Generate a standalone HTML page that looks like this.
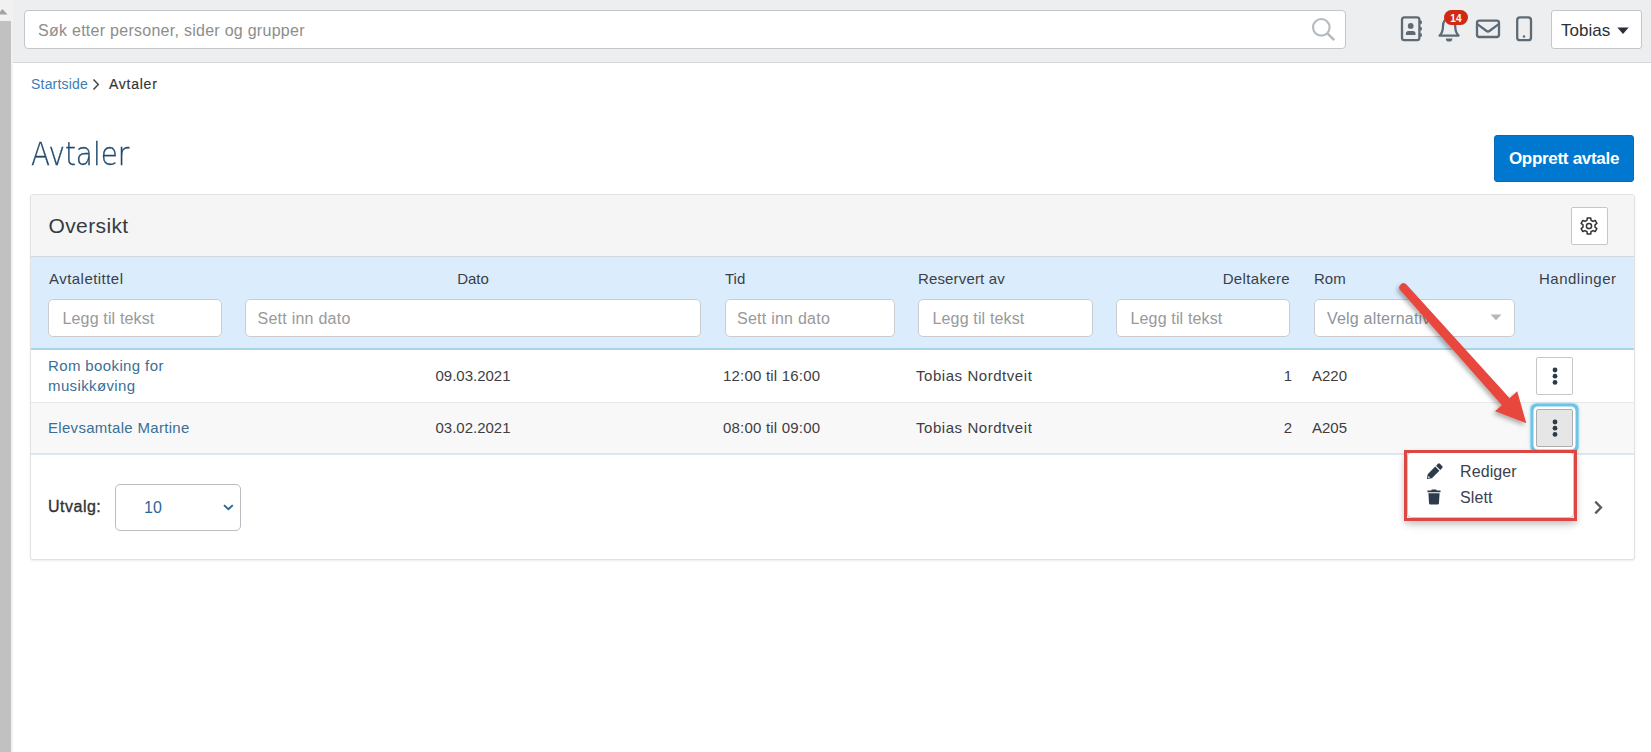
<!DOCTYPE html>
<html lang="nb">
<head>
<meta charset="utf-8">
<title>Avtaler</title>
<style>
*{box-sizing:border-box;margin:0;padding:0}
html,body{width:1651px;height:752px;overflow:hidden;background:#fff}
body{position:relative;font-family:"Liberation Sans",sans-serif;font-size:15px;color:#333;line-height:20px}
a{text-decoration:none;color:inherit}
.abs{position:absolute;white-space:nowrap}

/* left (clipped) browser scrollbar */
.scroll{position:absolute;left:0;top:0;width:13px;height:752px;background:#f1f1f1;z-index:20}
.scroll .thumb{position:absolute;left:0;top:21px;width:11px;height:731px;background:#c1c1c1}
.scroll svg{position:absolute;left:0;top:9px}

/* top bar */
.top{position:absolute;left:0;top:0;width:1651px;height:63px;background:#edeef0;border-bottom:1px solid #d4d6d9}
.search{position:absolute;left:24px;top:10px;width:1322px;height:39px;background:#fff;border:1px solid #c3c7ca;border-radius:4px}
.search .ph{position:absolute;left:13px;top:10px;font-size:16px;line-height:20px;color:#8d8d8d;letter-spacing:.27px;white-space:nowrap}
.search svg{position:absolute;left:1284.500px;top:5px}
.ico{position:absolute;top:0;left:0}
.badge{position:absolute;left:1444px;top:10px;width:24px;height:15px;border-radius:8px;background:#d12a14;color:#fff;font-size:10px;font-weight:700;line-height:18px;text-align:center;letter-spacing:.3px}
.user{position:absolute;left:1551px;top:10px;width:91px;height:39px;background:#fff;border:1px solid #c3c7ca;border-radius:3px}
.user span{position:absolute;left:9px;top:10px;font-size:17px;line-height:20px;color:#2b2f38;white-space:nowrap}
.user svg{position:absolute;left:65px;top:16px}

/* breadcrumb + title */
.crumbs{position:absolute;left:31px;top:74px;height:20px;font-size:14px;line-height:20px;white-space:nowrap}
.crumbs a{color:#3c7db4;letter-spacing:.2px}
.crumbs b{font-weight:400;-webkit-text-stroke:.15px #333;color:#333;letter-spacing:.75px;position:absolute;left:78px;top:0}
.crumbs svg{position:absolute;left:60px;top:4px}
h1{position:absolute;left:31px;top:132px;font-family:"DejaVu Sans Light","DejaVu Sans","Liberation Sans",sans-serif;font-size:31.500px;line-height:44px;font-weight:200;color:#1f4a6e;-webkit-text-stroke:.3px #1f4a6e;white-space:nowrap;transform:scaleX(.885);transform-origin:0 0}
.primary{position:absolute;left:1494px;top:135px;width:140px;height:47px;background:#0078d0;border:1px solid #0a69b2;border-radius:3px;color:#fff;font-weight:700;font-size:17px;line-height:45px;text-align:center;letter-spacing:-.3px;white-space:nowrap}

/* panel */
.panel{position:absolute;left:30px;top:194px;width:1605px;height:366px;background:#fff;border:1px solid #e2e2e2;border-radius:3px;box-shadow:0 1px 2px rgba(0,0,0,.08)}
.phead{position:absolute;left:0;top:0;width:1603px;height:62px;background:#f5f5f5;border-bottom:1px solid #ced8dd;border-radius:2px 2px 0 0}
.phead h2{position:absolute;left:17.500px;top:17px;font-size:21px;line-height:28px;font-weight:400;color:#363b42;letter-spacing:.38px;white-space:nowrap}
.gear{position:absolute;left:1540px;top:12px;width:37px;height:38px;background:#fff;border:1px solid #c6c6c6;border-radius:2px}
.gear svg{position:absolute;left:7px;top:8px}

table{position:absolute;left:0;top:62px;width:1603px;border-collapse:separate;border-spacing:0;table-layout:fixed}
thead th{background:#dbedfd;height:93px;vertical-align:top;font-weight:400;text-align:left;padding:12px 12px 0 12px;border-bottom:2px solid #a9d3ea;color:#3a3f48}
thead th:first-child{padding-left:18px;padding-right:11px}
thead th .lbl{display:block;height:20px;line-height:20px;white-space:nowrap}
.inp{display:block;position:relative;margin-top:10px;height:38px;background:#fff;border:1px solid #c9cdd1;border-radius:5px;text-align:left}
th:first-child .inp{margin-left:-1px}
.inp span{position:absolute;left:13.5px;top:9px;font-size:16px;line-height:20px;color:#999;white-space:nowrap;letter-spacing:.15px}
.inp svg{position:absolute;right:12.500px;top:14px}
tbody td{height:52px;padding:0 10px;vertical-align:middle;color:#3e3e42;white-space:nowrap}
tbody td:first-child{padding-left:17px;white-space:normal}
tbody tr.r1 td{height:53px;border-bottom:1px solid #e9e9e9}
tbody tr.r2 td{height:52px;background:#f8f8f8;border-bottom:2px solid #dbe8f1}
tbody a{color:#3a6f96}
.c{text-align:center}
.r{text-align:right}
.kebab{display:block;position:relative;left:-1px;width:37px;height:38px;background:#fff;border:1px solid #c6c6c6;border-radius:2px}
.kebab.on{background:#e6e6e6;border-color:#adadad;box-shadow:0 0 0 2.500px #fff,0 0 0 5.500px #6cc5e6,0 0 3px 6px rgba(108,197,230,.55)}
.kebab svg{position:absolute;left:15px;top:9px}
tbody td.act{vertical-align:top;padding-top:7px}
tbody tr.r2 td.act{padding-top:6px}

.pfoot{position:absolute;left:0;top:260px;width:1603px;height:103px}
.pfoot .lab{position:absolute;left:17px;top:42px;font-size:16px;font-weight:400;-webkit-text-stroke:.35px #333;color:#333;line-height:20px;letter-spacing:.5px;white-space:nowrap}
.sel{position:absolute;left:84px;top:29px;width:126px;height:47px;background:#fff;border:1px solid #b9bdc1;border-radius:5px}
.sel span{position:absolute;left:28px;top:13px;font-size:16px;line-height:20px;color:#2c6697;white-space:nowrap}
.sel svg{position:absolute;left:107px;top:19px}
.next{position:absolute;left:1562px;top:45px}

/* open dropdown + annotation */
.menu{position:absolute;left:1407px;top:452px;width:167px;height:66px;background:#fff;border:1px solid #c9c9c9;border-radius:4px;box-shadow:0 6px 12px rgba(0,0,0,.12);z-index:5}
.menu a{position:absolute;left:52px;font-size:16px;line-height:20px;color:#3b4150;letter-spacing:.1px;white-space:nowrap}
.menu svg{position:absolute}
.hl{position:absolute;left:1404px;top:450px;width:173px;height:71px;border:3px solid #db4843;z-index:6;box-shadow:0 3px 6px rgba(0,0,0,.16)}
.arrow{position:absolute;left:0;top:0;z-index:7;pointer-events:none}
</style>
</head>
<body>

<header class="top">
  <div class="search">
    <span class="ph">Søk etter personer, sider og grupper</span>
    <svg width="28" height="28" viewBox="0 0 28 28"><circle cx="11.3" cy="11.3" r="8.3" fill="none" stroke="#b4bbc0" stroke-width="2.1"/><path d="M17.4 17.4L24.2 24.2" stroke="#b4bbc0" stroke-width="2.6" fill="none"/></svg>
  </div>
  <svg class="ico" width="1651" height="62" viewBox="0 0 1651 62" fill="none" stroke="#5e6b75" stroke-width="2.3" stroke-linejoin="round" stroke-linecap="round">
    <!-- address book -->
    <rect x="1402" y="17.4" width="17.4" height="22.8" rx="2.4"/>
    <path d="M1420.800 21.600v1.400M1420.800 28v1.400M1420.800 34.400v1.400" stroke-width="2.200"/>
    <circle cx="1410.7" cy="25.9" r="2.9" fill="#5e6b75" stroke="none"/>
    <path d="M1405.9 35v-1.4a2.6 2.6 0 0 1 2.6-2.6h4.4a2.6 2.6 0 0 1 2.6 2.6v1.4z" fill="#5e6b75" stroke="none"/>
    <!-- bell -->
    <path d="M1439.6 35.6h19c-2.6-2.4-3.4-5.2-3.4-9.6 0-4.6-2.6-7.8-6.1-7.8s-6.100 3.2-6.100 7.800c0 4.400-.8 7.200-3.400 9.600z"/>
    <path d="M1445.9 38.400h6.400a3.200 3.200 0 0 1-6.400 0z" fill="#5e6b75" stroke="none"/>
    <!-- envelope -->
    <rect x="1477" y="20.700" width="22" height="16.300" rx="2.300"/>
    <path d="M1477.600 24.400l9 6.600a2.400 2.400 0 0 0 2.800 0l9-6.600"/>
    <!-- phone -->
    <rect x="1517.200" y="17.400" width="13.800" height="22.800" rx="2.800"/>
    <circle cx="1524" cy="36.400" r="1.250" fill="#5e6b75" stroke="none"/>
  </svg>
  <span class="badge">14</span>
  <div class="user"><span>Tobias</span>
    <svg width="12" height="8" viewBox="0 0 12 8"><path d="M.3.600h11.400L6 7z" fill="#2b2f38"/></svg>
  </div>
</header>

<nav class="crumbs"><a href="#">Startside</a><svg width="10" height="13" viewBox="0 0 10 13"><path d="M2.500 1.400l4.800 5-4.800 5" fill="none" stroke="#444" stroke-width="1.500"/></svg><b>Avtaler</b></nav>

<h1>Avtaler</h1>
<a class="primary" href="#">Opprett avtale</a>

<section class="panel">
  <div class="phead">
    <h2>Oversikt</h2>
    <div class="gear">
      <svg width="20" height="20" viewBox="-10 -10 20 20" fill="none" stroke="#333" stroke-width="1.500" stroke-linejoin="round"><path d="M1.99 -5.77L1.73 -8.12L-1.73 -8.12L-1.99 -5.77L-4.00 -4.60L-6.17 -5.55L-7.89 -2.56L-5.99 -1.16L-5.99 1.16L-7.89 2.56L-6.17 5.55L-4.00 4.60L-1.99 5.77L-1.73 8.12L1.73 8.12L1.99 5.77L4.00 4.60L6.17 5.55L7.89 2.56L5.99 1.16L5.99 -1.16L7.89 -2.56L6.17 -5.55L4.00 -4.60z"/><circle r="2.600"/></svg>
    </div>
  </div>

  <table>
    <colgroup><col style="width:202px"><col style="width:480px"><col style="width:193px"><col style="width:198px"><col style="width:198px"><col style="width:225px"><col style="width:107px"></colgroup>
    <thead>
      <tr>
        <th><span class="lbl" style="letter-spacing:.46px">Avtaletittel</span><span class="inp"><span>Legg til tekst</span></span></th>
        <th class="c"><span class="lbl">Dato</span><span class="inp"><span style="left:11.500px;letter-spacing:.25px">Sett inn dato</span></span></th>
        <th style="padding-right:11px"><span class="lbl">Tid</span><span class="inp"><span style="left:11px;letter-spacing:.25px">Sett inn dato</span></span></th>
        <th style="padding-right:11px"><span class="lbl" style="letter-spacing:.15px">Reservert av</span><span class="inp"><span>Legg til tekst</span></span></th>
        <th class="r"><span class="lbl" style="letter-spacing:.35px">Deltakere</span><span class="inp"><span>Legg til tekst</span></span></th>
        <th><span class="lbl">Rom</span><span class="inp"><span style="left:12px;color:#8c959d;letter-spacing:.2px">Velg alternativ</span><svg width="12" height="7" viewBox="0 0 12 7"><path d="M.500.500h11L6 6.300z" fill="#b3b8bc"/></svg></span></th>
        <th><span class="lbl" style="letter-spacing:.5px">Handlinger</span></th>
      </tr>
    </thead>
    <tbody>
      <tr class="r1">
        <td><a href="#" style="letter-spacing:.38px">Rom booking for musikkøving</a></td>
        <td class="c">09.03.2021</td>
        <td style="letter-spacing:.2px">12:00 til 16:00</td>
        <td style="letter-spacing:.55px">Tobias Nordtveit</td>
        <td class="r">1</td>
        <td>A220</td>
        <td class="act"><span class="kebab"><svg width="6" height="18" viewBox="0 0 6 18" fill="#2c3a49"><circle cx="3" cy="3" r="2.400"/><circle cx="3" cy="9.200" r="2.400"/><circle cx="3" cy="15.400" r="2.400"/></svg></span></td>
      </tr>
      <tr class="r2">
        <td><a href="#" style="letter-spacing:.3px">Elevsamtale Martine</a></td>
        <td class="c">03.02.2021</td>
        <td style="letter-spacing:.2px">08:00 til 09:00</td>
        <td style="letter-spacing:.55px">Tobias Nordtveit</td>
        <td class="r">2</td>
        <td>A205</td>
        <td class="act"><span class="kebab on"><svg width="6" height="18" viewBox="0 0 6 18" fill="#2c3a49"><circle cx="3" cy="3" r="2.400"/><circle cx="3" cy="9.200" r="2.400"/><circle cx="3" cy="15.400" r="2.400"/></svg></span></td>
      </tr>
    </tbody>
  </table>

  <div class="pfoot">
    <span class="lab">Utvalg:</span>
    <div class="sel"><span>10</span><svg width="12" height="8" viewBox="0 0 12 8"><path d="M1 1.100L5.400 5.300l4.400-4.200" fill="none" stroke="#2c6697" stroke-width="1.900"/></svg></div>
    <svg class="next" width="12" height="16" viewBox="0 0 12 16"><path d="M2.300 1.600l5.700 5.900-5.700 5.900" fill="none" stroke="#5a5a5a" stroke-width="2.300"/></svg>
  </div>
</section>

<div class="menu">
  <svg style="left:18px;top:9.500px" width="17" height="17" viewBox="0 0 18 18" fill="#2d3b4b"><path d="M9.800 3.800L14.200 8.200L6.200 16.200L1 17L1.800 11.800zM10.700 2.900l2-2a1.400 1.400 0 0 1 2 0l2.400 2.400a1.400 1.400 0 0 1 0 2l-2 2z"/><path d="M2.700 13.700l1.600 1.600-2.100.5z" fill="#fff"/></svg>
  <a href="#" style="top:9px">Rediger</a>
  <svg style="left:18.900px;top:35.800px" width="14" height="15.900" viewBox="0 0 15 17" fill="#2d3b4b"><path d="M.500 1.700h4l.600-1.200h4.800l.6 1.200h4v1.800H.500zM1.500 4.600h12l-.7 10.600a1.500 1.500 0 0 1-1.500 1.400H3.700a1.500 1.500 0 0 1-1.500-1.400z"/></svg>
  <a href="#" style="top:35px">Slett</a>
</div>
<div class="hl"></div>

<svg class="arrow" width="1651" height="752" viewBox="0 0 1651 752">
  <defs><filter id="sh" x="-10%" y="-10%" width="120%" height="120%"><feDropShadow dx="-2" dy="2.500" stdDeviation="2" flood-color="#000" flood-opacity=".3"/></filter></defs>
  <g filter="url(#sh)" fill="#e8473d" stroke="none">
    <path d="M1406.700 284.630L1509.950 398.460L1502.050 405.540L1400.300 290.370A4.300 4.300 0 0 1 1406.700 284.630z"/>
    <path d="M1526.300 423.200L1495 411.200L1517.200 391.300z"/>
  </g>
</svg>

<div class="scroll"><svg width="8" height="6" viewBox="0 0 8 6"><path d="M-2.500 5.500L2.500 0l5 5.500z" fill="#a3a3a3"/></svg><div class="thumb"></div></div>

</body>
</html>
